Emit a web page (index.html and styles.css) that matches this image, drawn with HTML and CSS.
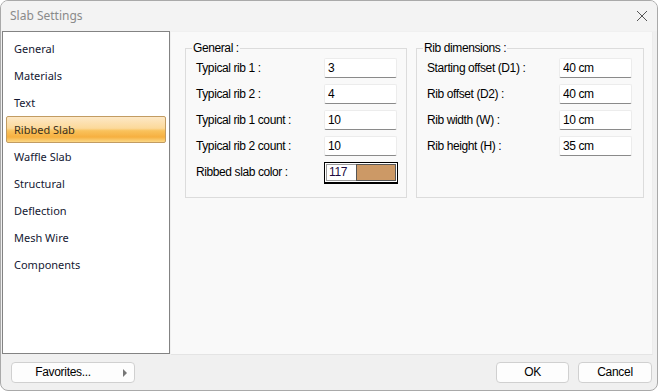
FILE: index.html
```html
<!DOCTYPE html>
<html lang="en">
<head>
  <meta charset="UTF-8" />
  <title>Slab Settings</title>
  <link rel="stylesheet" href="styles.css">
</head>
<body>
  <div class="window">
    <div class="titlebar">
      <span class="title">Slab Settings</span>
      <svg class="close" width="12" height="12" viewBox="0 0 12 12">
        <path d="M1 1 L11 11 M11 1 L1 11" stroke="#555" stroke-width="1" fill="none" />
      </svg>
    </div>

    <div class="main">
      <ul class="nav">
        <li>General</li>
        <li>Materials</li>
        <li>Text</li>
        <li class="selected">Ribbed Slab</li>
        <li>Waffle Slab</li>
        <li>Structural</li>
        <li>Deflection</li>
        <li>Mesh Wire</li>
        <li>Components</li>
      </ul>

      <div class="page">
        <fieldset class="group general">
          <legend>General :</legend>
          <div class="row"><label>Typical rib 1 :</label><input type="text" value="3"></div>
          <div class="row"><label>Typical rib 2 :</label><input type="text" value="4"></div>
          <div class="row"><label>Typical rib 1 count :</label><input type="text" value="10"></div>
          <div class="row"><label>Typical rib 2 count :</label><input type="text" value="10"></div>
          <div class="row">
            <label>Ribbed slab color :</label>
            <div class="color-field">
              <span class="color-index">117</span>
              <span class="color-swatch"></span>
            </div>
          </div>
        </fieldset>

        <fieldset class="group ribs">
          <legend>Rib dimensions :</legend>
          <div class="row"><label>Starting offset (D1) :</label><input type="text" value="40 cm"></div>
          <div class="row"><label>Rib offset (D2) :</label><input type="text" value="40 cm"></div>
          <div class="row"><label>Rib width (W) :</label><input type="text" value="10 cm"></div>
          <div class="row"><label>Rib height (H) :</label><input type="text" value="35 cm"></div>
        </fieldset>
      </div>
    </div>

    <div class="footer">
      <button class="btn favorites">Favorites...<span class="arrow"></span></button>
      <div class="actions">
        <button class="btn ok">OK</button>
        <button class="btn cancel">Cancel</button>
      </div>
    </div>
  </div>
</body>
</html>
```

FILE: styles.css
```css
html, body {
  margin: 0;
  padding: 0;
  width: 100%;
  height: 100%;
  background: #ffffff;
  overflow: hidden;
}

.window {
  box-sizing: border-box;
  width: 658px;
  height: 391px;
  display: flex;
  flex-direction: column;
  background: #f0f0f0;
  border: 1px solid #a9a9a9;
  border-radius: 8px;
  overflow: hidden;
  font-family: 'Liberation Sans', Arial, sans-serif;
  font-size: 12px;
  letter-spacing: -0.4px;
  color: #000;
}

.titlebar {
  height: 30px;
  flex: none;
  display: flex;
  align-items: center;
  justify-content: space-between;
  padding: 0 9px;
  background: #f3f3f3;
}

.title {
  font-family: 'Noto Sans', sans-serif;
  font-size: 12px;
  letter-spacing: 0;
  color: #8a8a8a;
  margin-top: -1px;
}

.main {
  flex: 1;
  display: flex;
  padding-left: 1px;
  padding-right: 4px;
}

.nav {
  width: 168px;
  box-sizing: border-box;
  margin: 0 0 1px 0;
  padding: 3px 0 0 0;
  list-style: none;
  background: #fff;
  border: 1px solid #838383;
  font-family: 'Noto Sans', sans-serif;
  font-size: 11px;
  letter-spacing: 0;
  color: #141832;
}

.nav li {
  height: 25px;
  line-height: 25px;
  margin: 0 3px;
  padding-left: 7px;
  border: 1px solid transparent;
  border-radius: 2px;
}

.nav li.selected {
  border-color: #c29c62;
  color: #3a3020;
  background: linear-gradient(to bottom, #fde8c6 0%, #fcd99a 45%, #f9c25c 55%, #f6b040 80%, #fbd886 100%);
}

.page {
  flex: 1;
  display: flex;
  align-items: flex-start;
  gap: 9px;
  margin-left: 1px;
  margin-top: 1px;
  padding: 9px 0 0 14px;
  background: #f9f9f9;
  border-right: 1px solid #ececec;
  border-bottom: 1px solid #e4e4e4;
}

.group {
  box-sizing: border-box;
  height: 157px;
  margin: 0;
  padding: 3px 0 0 10px;
  border: 1px solid #dcdcdc;
  display: flex;
  flex-direction: column;
  gap: 6px;
}

.group legend {
  padding: 0 1px;
  margin-left: -4px;
  color: #000;
}

.general {
  width: 222px;
}

.ribs {
  width: 228px;
}

.row {
  display: flex;
  align-items: center;
  height: 20px;
}

.general label {
  width: 128px;
}

.ribs label {
  width: 132px;
}

.row input {
  box-sizing: border-box;
  width: 73px;
  height: 20px;
  margin: 0;
  padding: 0 3px;
  font-family: 'Liberation Sans', Arial, sans-serif;
  font-size: 12px;
  letter-spacing: -0.4px;
  color: #000;
  background: #fff;
  border: 1px solid #ececec;
  border-bottom-color: #8a8a8a;
  border-radius: 2px;
  outline: none;
}

.color-field {
  box-sizing: border-box;
  width: 74px;
  height: 21px;
  display: flex;
  padding: 1px;
  border: 1px solid #000;
  box-shadow: 0 1px 0 #000;
  background: #fff;
  margin-top: 1px;
}

.color-index {
  width: 30px;
  box-sizing: border-box;
  padding-left: 2px;
  line-height: 15px;
  border: 1px solid #9a9a9a;
  border-right: none;
  color: #1c0a40;
}

.color-swatch {
  flex: 1;
  background: #cc9966;
  border: 1px solid #555;
}

.footer {
  height: 35px;
  flex: none;
  display: flex;
  align-items: center;
  justify-content: space-between;
  padding: 0 5px 0 10px;
}

.actions {
  display: flex;
  gap: 9px;
}

.btn {
  box-sizing: border-box;
  height: 21px;
  padding: 0;
  font-family: 'Liberation Sans', Arial, sans-serif;
  font-size: 12px;
  letter-spacing: -0.3px;
  color: #000;
  background: #fdfdfd;
  border: 1px solid #d0d0d0;
  border-radius: 4px;
  margin-top: -1px;
}

.favorites {
  width: 124px;
  padding-right: 20px;
  position: relative;
}

.arrow {
  position: absolute;
  right: 7px;
  top: 6px;
  width: 0;
  height: 0;
  border-top: 4px solid transparent;
  border-bottom: 4px solid transparent;
  border-left: 4px solid #777;
}

.ok {
  width: 73px;
}

.cancel {
  width: 74px;
}
```
